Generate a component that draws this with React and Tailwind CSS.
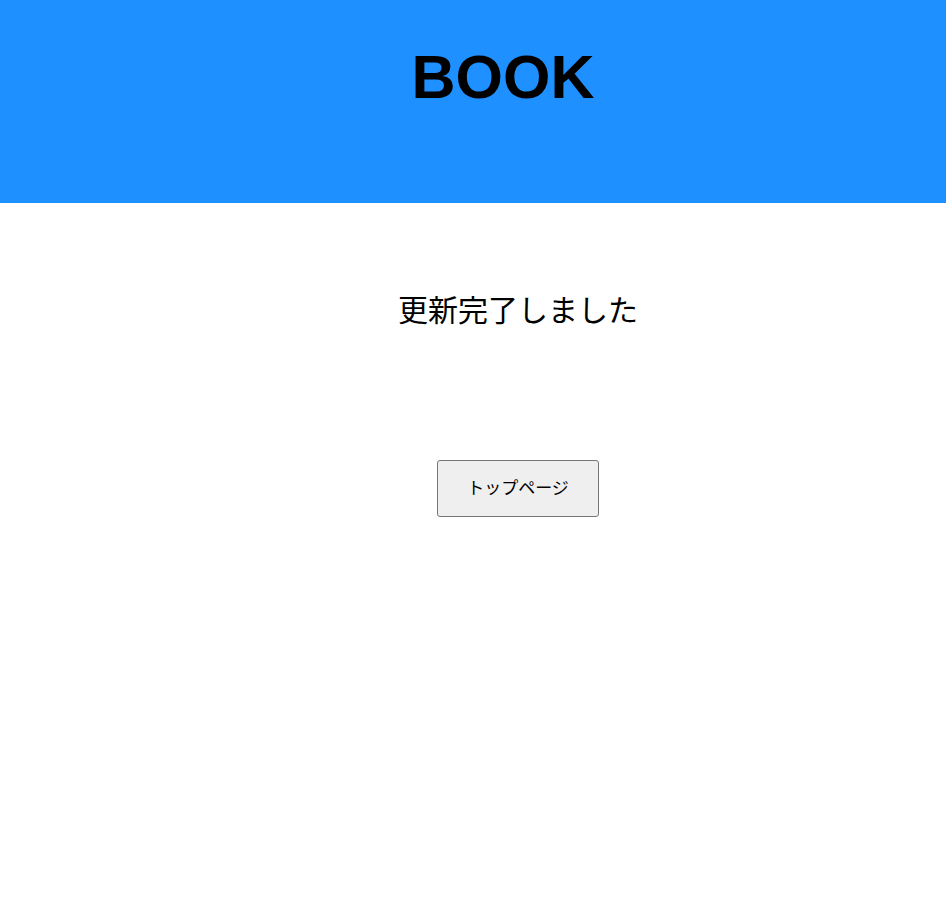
import React from 'react';

const App = () => {
  return (
    <div className="min-h-[897px] bg-white" style={{ fontFamily: '"Liberation Sans", "Noto Sans CJK JP", sans-serif' }}>
      {/* Header */}
      <header className="h-[203px] bg-[#1e90ff] pl-[60px] pt-[47px]">
        <h1 className="text-center text-[61px] font-bold leading-none text-black">BOOK</h1>
      </header>

      {/* Message */}
      <main className="flex flex-col items-center pl-[90px] pt-[90px]">
        <p className="text-[30px] leading-none text-black" style={{ fontFamily: '"Noto Sans CJK JP", sans-serif' }}>
          更新完了しました
        </p>
        <button
          type="button"
          className="mt-[137px] h-[57px] w-[162px] rounded-[3px] border border-[#767676] bg-[#efefef] pb-[3px] text-[17px] text-black"
          style={{ fontFamily: '"Noto Sans CJK JP", sans-serif' }}
        >
          トップページ
        </button>
      </main>
    </div>
  );
};

export default App;
